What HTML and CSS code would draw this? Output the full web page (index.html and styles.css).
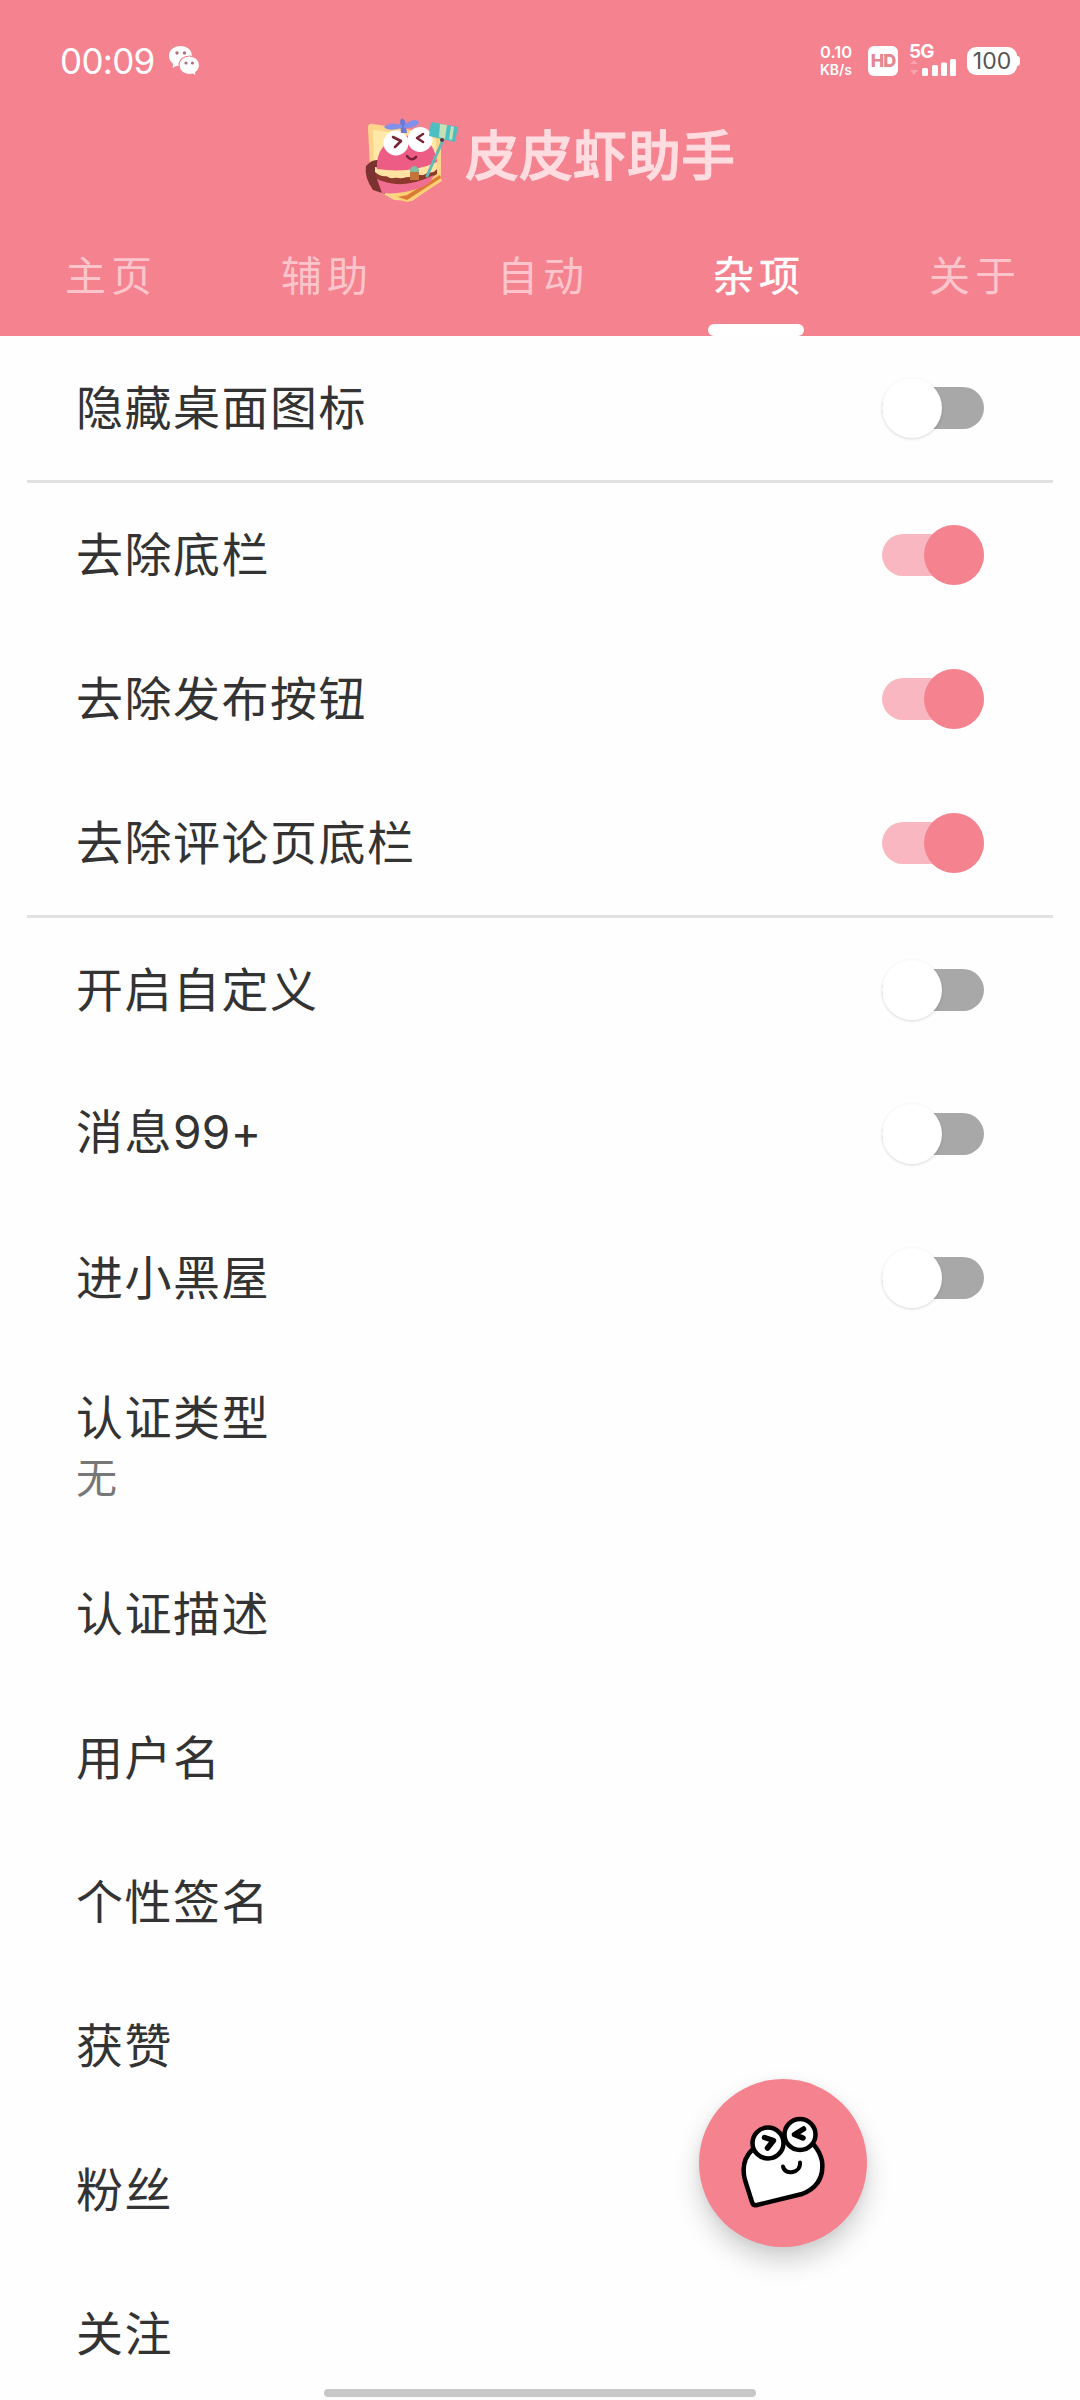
FILE: index.html
```html
<!DOCTYPE html>
<html lang="zh-CN">
<head>
<meta charset="utf-8">
<title>皮皮虾助手</title>
<link rel="stylesheet" href="styles.css">
</head>
<body>
<div class="screen">
  <header class="header">
    <div class="status">
      <span class="clock">00:09</span>
      <svg class="wechat" width="32" height="32" viewBox="0 0 32 32">
        <path d="M12.500 1C5.800 1 1 5.300 1 11c0 3.300 1.600 6 4.300 7.900L4.500 23l4.200-2.300c1.200.4 2.500.5 3.800.5C19 21.200 24 16.700 24 11S19 1 12.500 1z" fill="#fff"/>
        <path d="M21.500 11C15.500 11 11 15 11 20.300s4.500 9.200 10.500 9.200c1.200 0 2.300-.1 3.300-.4L28.300 31l-.7-3.400c2.300-1.700 3.900-4.300 3.900-7.300C31.500 15 27 11 21.500 11z" fill="#fff" stroke="#f5828f" stroke-width="1.200"/>
        <g fill="#a8747b"><circle cx="9" cy="8" r="1.700"/><circle cx="16.500" cy="8" r="1.700"/><circle cx="18" cy="18" r="1.600"/><circle cx="24.500" cy="18" r="1.600"/></g>
      </svg>
      <div class="indicators">
        <div class="speed"><span class="rate">0.10</span><span>KB/s</span></div>
        <span class="hd">HD</span>
        <div class="signal">
          <span class="gen">5G</span>
          <svg class="bars" width="48" height="18" viewBox="0 0 48 18">
            <path d="M1 5l4-4 4 4zM1 11h8l-4 5z" fill="#f9a3ad"/>
            <g fill="#fff"><rect x="13" y="9" width="6" height="8" rx="1.500"/><rect x="23" y="6" width="6" height="11" rx="1.500"/><rect x="32" y="3.500" width="6" height="13.500" rx="1.500"/><rect x="41" y="0" width="6" height="17" rx="1.500"/></g>
          </svg>
        </div>
        <span class="battery">100</span>
      </div>
    </div>
    <div class="brand">
      <svg class="logo" width="96" height="96" viewBox="0 0 96 96">
        <path d="M8 13Q8 8 13 9L78 19Q81 20 81 24V66L52 86 34 85 11 72z" fill="#fcd58a"/>
        <path d="M13 15L76 24V64L45 80 15 68z" fill="#ffe9a9"/>
        <path d="M34 81L79 58l3 8-34 21-5-1z" fill="#fbd072"/>
        <path d="M38 82l9 3 34-22-1-3-33 20z" fill="#dc7a35"/>
        <path d="M6 51Q12 44 18 45L25 79 13 75Q4 62 6 51z" fill="#7b3230"/>
        <path d="M15 58Q46 70 77 52V59Q52 78 18 70z" fill="#8d382c"/>
        <path d="M17 64Q42 76 74 60Q70 70 60 73 40 80 22 78z" fill="#f06e91"/>
        <path d="M15 52Q45 60 77 46V54q-4 5-9 3-4 5-10 2-5 5-11 2-5 4-11 1-5 3-9-1-7 1-12-4z" fill="#ffe2a2"/>
        <path d="M17 54Q15 28 43 21 73 17 77 47 51 59 17 54z" fill="#ec5c84"/>
        <circle cx="36" cy="28" r="12.500" fill="#fff"/><circle cx="60" cy="24.500" r="12.500" fill="#fff"/>
        <path d="M33 22l8 4-6 6M63 19l-6 4 6 4" fill="none" stroke="#762634" stroke-width="2.600" stroke-linecap="round" stroke-linejoin="round"/>
        <path d="M47 41q4 6 9 1" fill="none" stroke="#7b2038" stroke-width="2.500" stroke-linecap="round"/>
        <path d="M40 6q2-5 5 0l2 12h-6z" fill="#6b79d8"/>
        <path d="M42 10Q30 6 24 12q4 5 18 1zM44 10Q55 2 59 7q-1 6-15 6z" fill="#8390ea"/>
        <path d="M83 25L67 61" stroke="#63b9b8" stroke-width="3" stroke-linecap="round"/>
        <path d="M71 7L98 12 95 27 69 21z" fill="#4dbfc2"/><path d="M80 9l7 1-2 14-6-2zM91 11l3 1-2 13-3-1z" fill="#c7dfb5"/>
        <circle cx="82" cy="25" r="2" fill="#5a3542"/>
        <path d="M50 54q4-6 9 0v7h-9z" fill="#80bda1"/><path d="M50 57h9v8h-9z" fill="#c57439"/>
      </svg>
      <h1 class="title">皮皮虾助手</h1>
    </div>
    <nav class="tabs">
      <a class="tab">主页</a>
      <a class="tab">辅助</a>
      <a class="tab">自动</a>
      <a class="tab active">杂项</a>
      <a class="tab">关于</a>
    </nav>
  </header>
  <main class="list">
    <div class="row"><span>隐藏桌面图标</span><i class="switch"></i></div>
    <hr class="divider">
    <div class="row"><span>去除底栏</span><i class="switch on"></i></div>
    <div class="row"><span>去除发布按钮</span><i class="switch on"></i></div>
    <div class="row"><span>去除评论页底栏</span><i class="switch on"></i></div>
    <hr class="divider">
    <div class="row"><span>开启自定义</span><i class="switch"></i></div>
    <div class="row"><span>消息<b class="num">99+</b></span><i class="switch"></i></div>
    <div class="row"><span>进小黑屋</span><i class="switch"></i></div>
    <div class="row tall"><span>认证类型</span><small class="value">无</small></div>
    <div class="row"><span>认证描述</span></div>
    <div class="row"><span>用户名</span></div>
    <div class="row"><span>个性签名</span></div>
    <div class="row"><span>获赞</span></div>
    <div class="row"><span>粉丝</span></div>
    <div class="row"><span>关注</span></div>
  </main>
  <button class="fab" aria-label="皮皮虾">
    <svg width="168" height="168" viewBox="0 0 168 168">
      <g stroke="#000" stroke-width="4.500" stroke-linecap="round" stroke-linejoin="round" fill="#fff">
        <path d="M54 70Q41 82 46 101L53 123Q54 127 58 126L103 115Q126 106 123 82 121 73 115 66L90 60z"/>
        <circle cx="69" cy="64" r="15.500"/><circle cx="101" cy="55.500" r="15.500"/>
        <path d="M65.500 58.500L74.500 61.500 68.500 69M104.500 50L95.500 55.500 104 59" fill="none" stroke-width="5.500"/>
        <path d="M84 87.500C86 97 102 94 101 83.500" fill="none" stroke-width="4"/>
      </g>
    </svg>
  </button>
  <div class="home-bar"></div>
</div>
</body>
</html>
```
FILE: styles.css
```css
* { box-sizing: border-box; }
body {
  margin: 0;
  background: #fefefe;
  font-family: "Noto Sans CJK SC", sans-serif;
}
.screen {
  position: relative;
  width: 1080px;
  height: 2400px;
  overflow: hidden;
}
.header {
  display: flex;
  flex-direction: column;
  height: 336px;
  background: #f5828f;
}
.status {
  display: flex;
  align-items: center;
  height: 120px;
  padding: 1px 63px 0 60px;
  color: #fff;
  font-family: Inter, sans-serif;
}
.clock {
  width: 108px;
  font-size: 35px;
  line-height: 36px;
  letter-spacing: -.7px;
  white-space: nowrap;
}
.wechat { flex: none; }
.indicators {
  display: flex;
  align-items: center;
  margin-left: auto;
}
.speed {
  display: flex;
  flex-direction: column;
  align-items: center;
  width: 34px;
  margin-right: 15px;
  font-size: 14px;
  font-weight: 600;
  line-height: 17px;
}
.rate { font-size: 16.500px; }
.hd {
  width: 30px;
  height: 30px;
  margin-right: 11px;
  border-radius: 6px;
  background: #fff;
  color: #e58691;
  font-size: 18px;
  font-weight: 800;
  line-height: 30px;
  letter-spacing: -1px;
  text-align: center;
}
.signal {
  width: 48px;
  height: 32px;
  margin-right: 10px;
}
.gen {
  display: block;
  height: 14px;
  font-size: 19px;
  font-weight: 700;
  line-height: 14px;
  letter-spacing: -.8px;
}
.bars { display: block; }
.battery {
  position: relative;
  width: 50px;
  height: 28px;
  border-radius: 9px;
  background: #fff;
  color: #555;
  font-size: 23px;
  line-height: 28px;
  text-align: center;
}
.battery::after {
  content: "";
  position: absolute;
  top: 9px;
  right: -3px;
  width: 4px;
  height: 10px;
  border-radius: 0 3px 3px 0;
  background: #fff;
}
.brand {
  display: flex;
  align-items: center;
  height: 96px;
  padding-left: 360px;
}
.logo {
  flex: none;
  margin-top: -11px;
  overflow: visible;
}
.title {
  margin: -31px 0 0 9px;
  color: #ffdce0;
  font-size: 54px;
  font-weight: 500;
  line-height: 80px;
  -webkit-text-stroke: 1px #ffdce0;
}
.tabs {
  display: flex;
  height: 120px;
}
.tab {
  position: relative;
  width: 216px;
  padding-left: 6px;
  color: #fbc5cb;
  font-size: 41px;
  line-height: 115px;
  letter-spacing: 5px;
  text-align: center;
}
.tab.active {
  color: #fff;
  -webkit-text-stroke: .4px #fff;
}
.tab.active::after {
  content: "";
  position: absolute;
  left: 60px;
  bottom: 0;
  width: 96px;
  height: 12px;
  border-radius: 6px;
  background: #fff;
}
.row {
  display: flex;
  align-items: center;
  justify-content: space-between;
  height: 144px;
  padding: 0 96px 0 76px;
  color: #333;
  font-size: 47px;
  line-height: 60px;
  letter-spacing: 1.500px;
}
.row > span {
  margin-top: -7px;
}
.num {
  font-family: Inter, sans-serif;
  font-size: 46px;
  font-weight: 400;
  letter-spacing: .3px;
}
.row.tall {
  flex-direction: column;
  align-items: flex-start;
  justify-content: center;
  height: 192px;
}
.row.tall > span {
  margin-top: -3px;
}
.value {
  color: #777;
  font-size: 41px;
}
.switch {
  display: flex;
  align-items: center;
  width: 102px;
  height: 42px;
  border-radius: 21px;
  background: #a8a8a8;
}
.switch::before {
  content: "";
  width: 60px;
  height: 60px;
  flex: none;
  border-radius: 50%;
  background: #fff;
  box-shadow: 0 1px 3px rgba(0, 0, 0, .15);
}
.switch.on {
  justify-content: flex-end;
  background: #f9b8c1;
}
.switch.on::before {
  background: #f5828f;
  box-shadow: none;
}
.divider {
  height: 3px;
  margin: 0 27px;
  border: 0;
  background: #e2e2e2;
}
.fab {
  position: absolute;
  left: 699px;
  top: 2079px;
  width: 168px;
  height: 168px;
  padding: 0;
  border: 0;
  border-radius: 50%;
  background: #f5828f;
  box-shadow: 0 14px 26px rgba(0, 0, 0, .18), 0 2px 8px rgba(0, 0, 0, .05);
}
.fab svg { display: block; }
.home-bar {
  position: absolute;
  left: 324px;
  top: 2389px;
  width: 432px;
  height: 8px;
  border-radius: 4px;
  background: #c8c8c8;
}
```
